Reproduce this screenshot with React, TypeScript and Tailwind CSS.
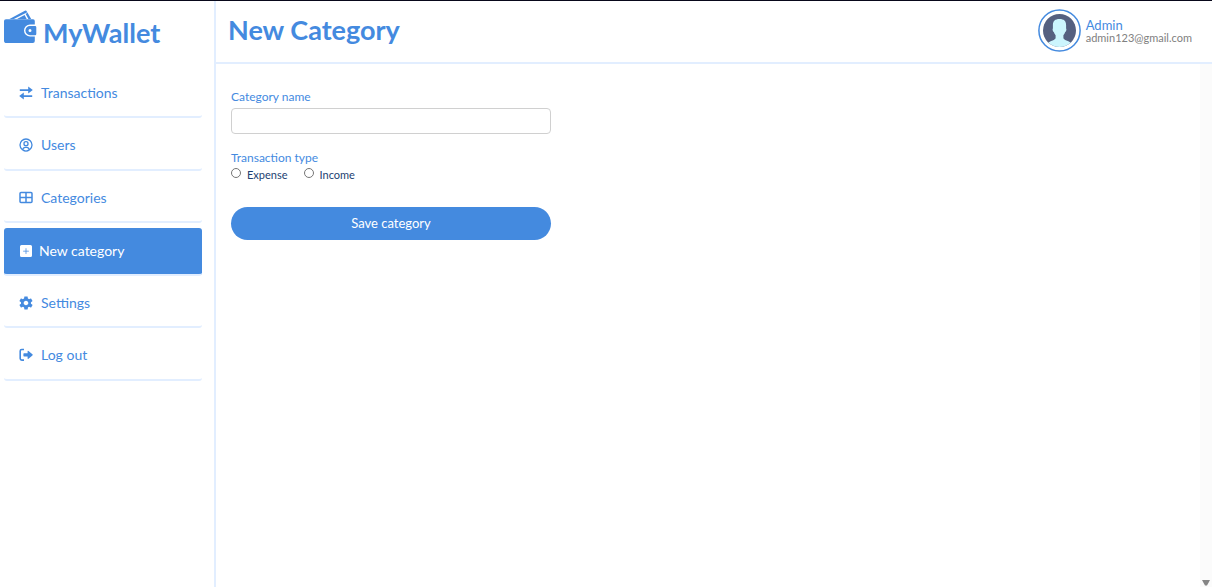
import type { ReactNode } from "react";
import { BiUserCircle } from "react-icons/bi";
import { BsPlusSquareFill } from "react-icons/bs";
import { IoMdSettings } from "react-icons/io";

function WalletIcon() {
  return (
    <svg viewBox="0 0 33 34" className="h-[34px] w-[33px] shrink-0" fill="currentColor" aria-hidden="true">
      <path d="M5.500 9 20.400.9q1.700-.9 2.600.8L27.200 9h-2.800l-3-5.600L10.500 9Z" />
      <path d="m13 9 7.600-4.100L22.700 9Z" />
      <path d="M7 8.800 21.200 1.600" stroke="#fff" strokeWidth=".7" transform="translate(2.200 1)" />
      <path d="M2 9.200h27q1.800 0 1.800 1.800v3.600H26a6 6 0 0 0 0 12h4.800V31q0 2-2 2H2.600Q0 33 0 30.400V11q0-1.800 2-1.800Z" />
      <path
        fillRule="evenodd"
        d="M26 16h5q1.300 0 1.300 1.300V24q0 1.200-1.300 1.200h-5a4.600 4.600 0 0 1 0-9.200Zm0 3.100a1.500 1.500 0 1 0 0 3 1.500 1.500 0 0 0 0-3Z"
      />
    </svg>
  );
}

function TransferIcon() {
  return (
    <svg viewBox="0 0 14 14" className="size-[14px] shrink-0" fill="currentColor" aria-hidden="true">
      <path d="M.8 3.200h8.400V.6l4.600 3.400-4.600 3.400V4.900H.8Z" />
      <path d="M13.200 9.200H4.800V6.600L.2 10l4.600 3.400v-2.500h8.400Z" />
    </svg>
  );
}

function TableIcon() {
  return (
    <svg viewBox="0 0 14 14" className="size-[14px] shrink-0" fill="none" stroke="currentColor" strokeWidth="1.500" aria-hidden="true">
      <rect x="1" y="1.500" width="12" height="10" rx="1" />
      <path d="M1 6.500h12M7 1.500v10" />
    </svg>
  );
}

function LogoutIcon() {
  return (
    <svg viewBox="0 0 14 14" className="size-[14px] shrink-0" fill="currentColor" aria-hidden="true">
      <path d="M5 1.500H2.800Q1.200 1.500 1.200 3.100v7.400q0 1.600 1.600 1.600H5" fill="none" stroke="currentColor" strokeWidth="1.600" />
      <path d="M5 5.200h3.600V3.300q0-1 .9-.4l3.900 3.300q.7.600 0 1.200l-3.900 3.300q-.9.600-.9-.4V8.400H5q-.6 0-.6-.6v-2q0-.6.6-.6Z" />
    </svg>
  );
}

const items: { label: string; icon: ReactNode; active?: boolean }[] = [
  { label: "Transactions", icon: <TransferIcon /> },
  { label: "Users", icon: <BiUserCircle className="size-4 shrink-0" /> },
  { label: "Categories", icon: <TableIcon /> },
  { label: "New category", icon: <BsPlusSquareFill className="size-3 shrink-0" />, active: true },
  { label: "Settings", icon: <IoMdSettings className="size-4 shrink-0" /> },
  { label: "Log out", icon: <LogoutIcon /> },
];

function Avatar() {
  return (
    <svg viewBox="0 0 43 43" className="size-[43px]" role="img" aria-label="Admin">
      <defs>
        <clipPath id="face">
          <circle cx="21.5" cy="21.5" r="16.500" />
        </clipPath>
      </defs>
      <circle cx="21.5" cy="21.5" r="20.6" fill="#fff" stroke="#448adf" strokeWidth="1.500" />
      <g clipPath="url(#face)">
        <path fill="#556080" d="M0 0h43v43H0z" />
        <path
          fill="#ccf5fd"
          d="M21.5 10c4.400 0 6.600 2 6.600 6v3.500c.8 1-.1 3-.9 3.600-.4 1.300-1 2.400-1.800 3.200v2.400c0 1.400 1.400 2 3 2.800 2.800 1.200 5 2 5.600 3.500V43H9v-8c.6-1.500 2.800-2.300 5.600-3.500 1.600-.8 3-1.400 3-2.800v-2.400c-.8-.8-1.400-1.900-1.800-3.200-.8-.6-1.700-2.600-.9-3.600V16c0-4 2.200-6 6.600-6Z"
        />
      </g>
    </svg>
  );
}

export default function App() {
  return (
    <div className="flex min-h-screen border-t border-[#08081a] bg-white font-['Lato','Open_Sans',sans-serif] text-[#448adf]">
      <aside className="w-[216px] shrink-0 border-r-2 border-[#e2eeff] pl-1 pr-3">
        <div className="flex h-[69px] items-start gap-[6px] pt-[9px]">
          <WalletIcon />
          <span className="pt-[7px] text-[27px] font-bold leading-8">MyWallet</span>
        </div>
        <nav className="flex h-[311px] flex-col justify-between">
          {items.map((item) => (
            <a
              key={item.label}
              href="#"
              className={`flex h-12 items-center rounded-[3px] border-b-2 border-[#e2eeff] pl-[15px] text-sm ${
                item.active ? "gap-[6px] bg-[#448adf] text-white" : "gap-2 pb-px"
              }`}
            >
              <span className="flex w-[14px] justify-center">{item.icon}</span>
              {item.label}
            </a>
          ))}
        </nav>
      </aside>

      <div className="flex min-w-0 flex-1 flex-col">
        <header className="flex h-[63px] items-center justify-between border-b-2 border-[#e2eeff] pb-[3px] pl-3 pr-5">
          <h1 className="text-[27px] font-bold leading-8">New Category</h1>
          <div className="flex items-center gap-[5px]">
            <Avatar />
            <div>
              <p className="text-[13px] leading-[14px]">Admin</p>
              <p className="text-[11px] leading-[11px] text-[#808080]">admin123@gmail.com</p>
            </div>
          </div>
        </header>

        <div className="flex flex-1">
          <main className="flex-1 px-[15px] pt-[25px]">
            <form className="flex max-w-80 flex-col text-xs">
              <label htmlFor="category-name" className="leading-4">
                Category name
              </label>
              <input
                id="category-name"
                type="text"
                className="mt-[3px] h-[26px] w-full rounded border border-[#d0d0d0] bg-white px-2 text-[#1c3f72] outline-none"
              />
              <fieldset className="mt-4">
                <legend className="leading-4">Transaction type</legend>
                <div className="flex gap-4 text-[11px] leading-4 text-[#1c3f72]">
                  {["Expense", "Income"].map((type) => (
                    <label key={type} className="flex items-start gap-[6px]">
                      <input
                        type="radio"
                        name="type"
                        value={type}
                        className="mt-[2px] size-[10px] appearance-none rounded-full border border-[#767676] bg-white checked:bg-[#448adf]"
                      />
                      <span className="pt-px">{type}</span>
                    </label>
                  ))}
                </div>
              </fieldset>
              <button type="submit" className="mt-6 h-[33px] rounded-full bg-[#448adf] text-[13px] text-white">
                Save category
              </button>
            </form>
          </main>
          <div className="flex w-3 items-end justify-center bg-[#fbfbfb] pb-px" aria-hidden="true">
            <svg viewBox="0 0 8 6" className="h-[6px] w-2" fill="#858585">
              <path d="M0 0h8L5 5.500H3z" />
            </svg>
          </div>
        </div>
      </div>
    </div>
  );
}
